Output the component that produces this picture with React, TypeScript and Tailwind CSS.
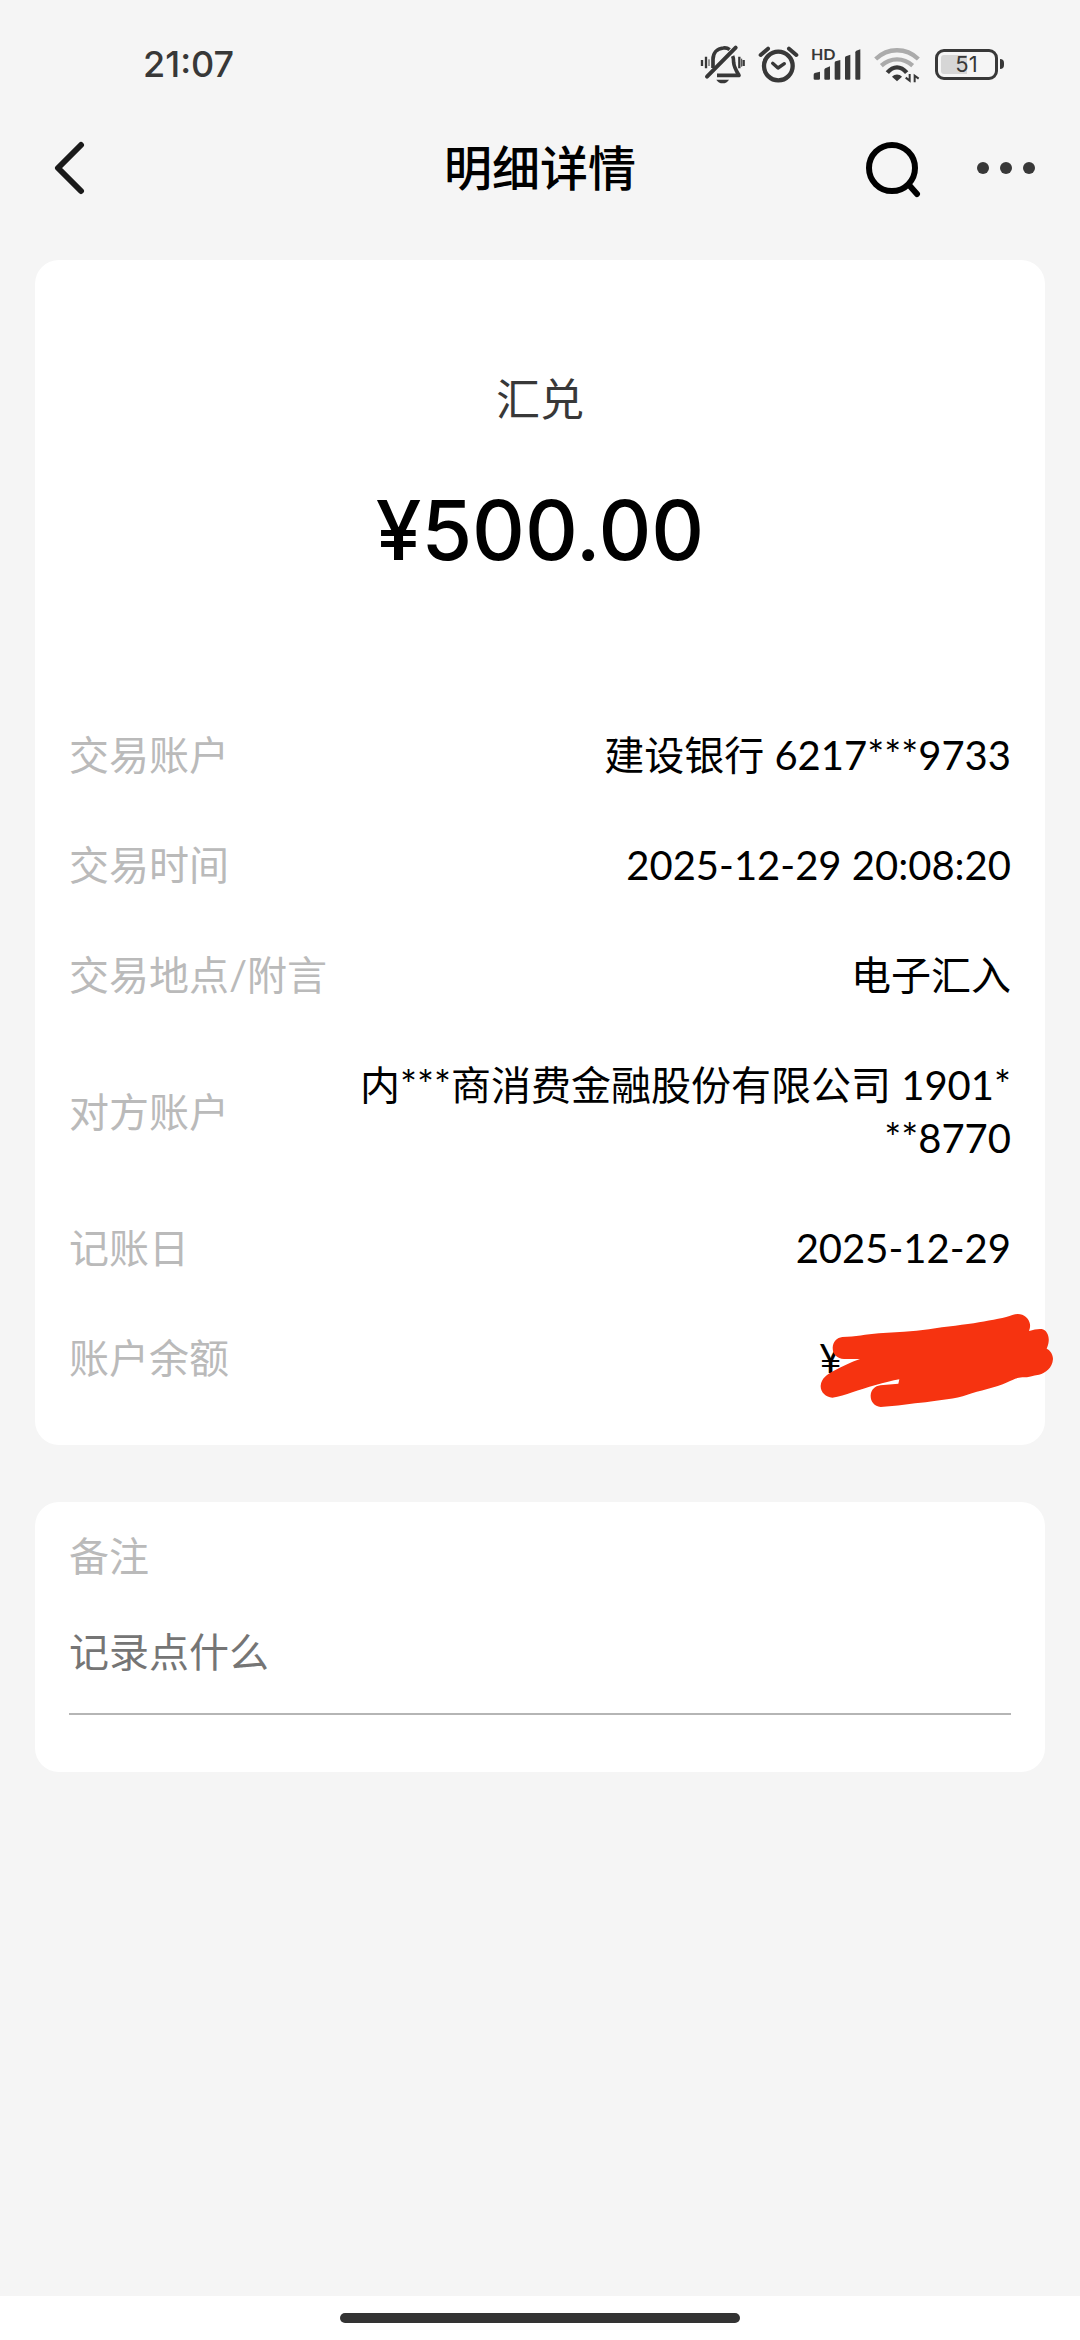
import { ReactNode } from "react";

const BellOffIcon = () => (
  <svg viewBox="33 42 138 120" className="h-10 w-[46px]" fill="none" stroke="#383838">
    <path d="M72 114V88C72 68 84 56 103 54C110 53 117 55 122 59" strokeWidth="11" />
    <path d="M131 78C134 84 134 90 134 98C135 112 141 121 150 136H84" strokeWidth="11" strokeLinejoin="round" />
    <path d="M54 140L140 53" strokeWidth="12" strokeLinecap="round" />
    <path d="M82 149H120C116 156 109 160 101 160C93 160 86 156 82 149Z" fill="#383838" stroke="none" />
    <path d="M39 90V108M51 80V115M151 80V115M164 90V108" strokeWidth="7" />
    <path d="M60 88V108M158 86V110" strokeWidth="3" />
  </svg>
);

const AlarmIcon = () => (
  <svg viewBox="210 42 123 114" className="h-[38px] w-[41px]" fill="none" stroke="#383838">
    <circle cx="271" cy="105" r="43" strokeWidth="13" />
    <path d="M254 97L270 111L289 98" strokeWidth="10" strokeLinecap="round" strokeLinejoin="round" />
    <path d="M218 72L240 53M325 72L303 53" strokeWidth="12" strokeLinecap="round" />
  </svg>
);

const SignalIcon = () => (
  <div className="relative h-8 w-[50px]">
    <span className="absolute top-0 left-0 font-[Lato] text-[16px] leading-[12px] font-bold">HD</span>
    <svg viewBox="363 54 150 96" className="size-full" fill="#383838">
      <path d="M371 134Q371 131 374 129L390 125V146Q390 149 386 149H375Q371 149 371 146Z" />
      <path d="M403 120Q403 117 406 115L420 109V146Q420 149 417 149H406Q403 149 403 146Z" />
      <path d="M434 98Q434 95 437 94L451 90V146Q451 149 448 149H437Q434 149 434 146Z" />
      <path d="M465 83Q465 80 468 79L481 74V146Q481 149 478 149H468Q465 149 465 146Z" />
      <path d="M496 67Q496 64 499 62L511 58V146Q511 149 508 149H499Q496 149 496 146Z" />
    </svg>
  </div>
);

const WifiIcon = () => (
  <svg viewBox="549 48 150 111" className="h-[37px] w-[50px]" fill="none">
    <path d="M557 87C594 52 648 52 685 87" stroke="#ababab" strokeWidth="13" />
    <path d="M574 107C602 82 640 82 668 107" stroke="#ababab" strokeWidth="13" />
    <path d="M592 128C610 107 632 107 650 128" stroke="#383838" strokeWidth="13" />
    <path d="M606 140C615 131 627 131 636 140L621 154Z" fill="#383838" />
    <path d="M659 132V152L647 143M674 157V137L686 146" stroke="#383838" strokeWidth="6" />
  </svg>
);

const Battery = () => (
  <div className="flex items-center gap-[2px]">
    <div className="relative h-[31px] w-[63px] rounded-[9px] border-3 border-[#383838] p-[3px]">
      <div className="h-full w-1/2 rounded-l-[3px] bg-[#d6d6d6]" />
      <span className="absolute inset-0 text-center font-[Inter] text-[22px] leading-[25px]">51</span>
    </div>
    <div className="h-[10px] w-1 rounded-r-sm bg-[#383838]" />
  </div>
);

const StatusBar = () => (
  <div className="flex h-32 items-center justify-between pr-[76px] pl-[143px] text-[#383838]">
    <span className="font-[Inter] text-[36px] leading-10 font-medium">21:07</span>
    <div className="flex items-center gap-3">
      <BellOffIcon />
      <AlarmIcon />
      <SignalIcon />
      <WifiIcon />
      <Battery />
    </div>
  </div>
);

const Header = () => (
  <header className="grid h-[79px] grid-cols-[1fr_auto_1fr] items-center px-[42px]">
    <button type="button" aria-label="返回" className="justify-self-start pl-3">
      <svg viewBox="0 0 31 54" className="h-[54px] w-[31px]" fill="none" stroke="#1a1a1a" strokeWidth="6" strokeLinecap="round" strokeLinejoin="round">
        <path d="M27 4L4 27L27 50" />
      </svg>
    </button>
    <h1 className="text-5xl font-medium text-black">明细详情</h1>
    <div className="flex items-center gap-14 justify-self-end">
      <button type="button" aria-label="搜索">
        <svg viewBox="0 0 56 60" className="h-15 w-14" fill="none" stroke="#000" strokeWidth="6">
          <circle cx="27" cy="30" r="23" />
          <path d="M44 47L52 56" strokeLinecap="round" />
        </svg>
      </button>
      <button type="button" aria-label="更多" className="flex gap-[11px] pr-[3px]">
        <i className="size-3 rounded-full bg-[#383838]" />
        <i className="size-3 rounded-full bg-[#383838]" />
        <i className="size-3 rounded-full bg-[#383838]" />
      </button>
    </div>
  </header>
);

const Scribble = () => (
  <svg viewBox="120 70 705 285" className="absolute -top-[19px] -right-[43px] h-[95px] w-[235px]" fill="#f63310">
    <path d="M190 142C230 142 260 134 300 131C350 127 400 127 450 119C500 110 560 106 600 98C640 91 680 84 700 76C725 66 750 80 753 104C754 112 752 118 750 124C765 119 778 117 788 118C808 122 816 150 803 177C815 183 822 195 822 208C820 235 800 250 780 255C760 258 745 264 730 263C710 264 700 271 685 278C650 294 600 304 565 315C530 328 480 331 440 338C400 341 350 350 305 352C285 350 274 335 275 317C276 300 288 289 304 287L358 282L361 269C320 276 260 295 220 308C200 315 180 322 160 324C140 322 124 308 125 288C127 265 145 253 165 243C190 230 215 218 243 208L195 208C175 206 161 195 161 174C162 155 174 144 190 142Z" />
  </svg>
);

type RowProps = {
  label: string;
  children: ReactNode;
};
const Row = ({ label, children }: RowProps) => (
  <div className="flex items-center justify-between">
    <dt className="text-[#bababa]">{label}</dt>
    <dd className="relative max-w-[70%] text-right break-all text-black">{children}</dd>
  </div>
);

const DetailCard = () => (
  <section className="rounded-3xl bg-white px-[34px] pt-[109px] pb-15">
    <h2 className="text-center text-[44px] leading-[60px] text-[#383838]">汇兑</h2>
    <p className="mt-[54px] text-center font-[Inter] text-[82px] leading-24 font-medium text-black">¥500.00</p>
    <dl className="mt-[150px] flex flex-col gap-[57px] text-[40px] leading-[53px]">
      <Row label="交易账户">建设银行 6217***9733</Row>
      <Row label="交易时间">2025-12-29 20:08:20</Row>
      <Row label="交易地点/附言">电子汇入</Row>
      <Row label="对方账户">内***商消费金融股份有限公司 1901***8770</Row>
      <Row label="记账日">2025-12-29</Row>
      <Row label="账户余额">
        <span className="block w-48 text-left">¥</span>
        <Scribble />
      </Row>
    </dl>
  </section>
);

const NoteCard = () => (
  <section className="flex flex-col rounded-3xl bg-white px-[34px] pt-7 pb-[57px] text-[40px] leading-[53px]">
    <label htmlFor="note" className="text-[#bababa]">
      备注
    </label>
    <input
      id="note"
      type="text"
      placeholder="记录点什么"
      className="mt-[42px] h-[90px] w-full border-b-2 border-[#b5b5b5] pb-[35px] outline-none placeholder:text-[#757575]"
    />
  </section>
);

export default function App() {
  return (
    <div className="flex min-h-screen flex-col bg-[#f5f5f5] font-[Lato,'Noto_Sans_CJK_SC',sans-serif]">
      <StatusBar />
      <Header />
      <main className="flex flex-1 flex-col gap-[57px] px-[35px] pt-[53px]">
        <DetailCard />
        <NoteCard />
      </main>
      <footer className="flex h-11 items-center justify-center bg-white">
        <div className="h-[10px] w-[37%] rounded-full bg-[#333]" />
      </footer>
    </div>
  );
}
